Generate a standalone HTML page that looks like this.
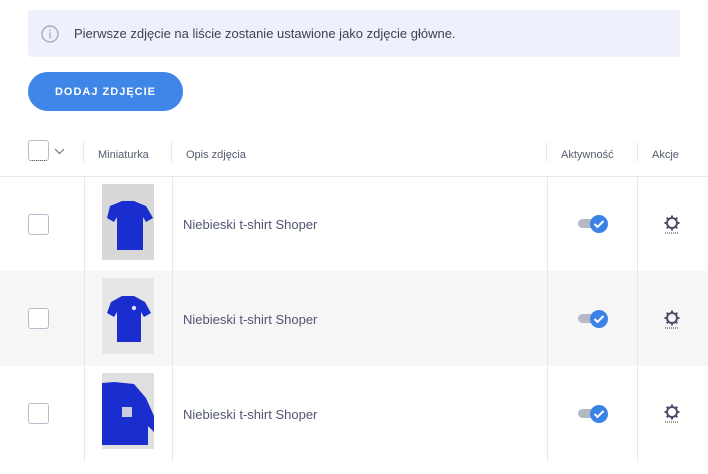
<!DOCTYPE html>
<html><head><meta charset="utf-8"><style>
body{margin:0;width:708px;height:474px;background:#fff;font-family:"Liberation Sans",sans-serif;position:relative;overflow:hidden;color:#4a5068}
.a{position:absolute}
.info{left:28px;top:10px;width:652px;height:47px;background:#eef1fb;border-radius:3px}
.btn{left:28px;top:72px;width:155px;height:39px;background:#3f86e8;border-radius:20px;color:#fff;font-weight:bold;font-size:11px;letter-spacing:1px;text-align:center;line-height:41px}
.hd{font-size:11px;color:#555b6e;top:149px}
.vl{width:1px;background:#e6e8ec}
.cb{width:19px;height:19px;border:1px solid #b9bccb;border-radius:3px;background:#fff}
.txt{font-size:13px;color:#505670}
.tog{width:22px;height:9px;background:#b4b9c6;border-radius:5px}
.knob{width:18px;height:18px;border-radius:50%;background:#3b82e6}
.img{width:52px;height:76px;background:#dcdcdc}
</style></head><body>
<div class="a info"></div>
<svg class="a" style="left:41px;top:25px" width="18" height="18" viewBox="0 0 18 18"><circle cx="9" cy="9" r="8" fill="none" stroke="#a7acbd" stroke-width="1.4"/><rect x="8.3" y="7.5" width="1.4" height="6" fill="#a7acbd"/><rect x="8.3" y="4.5" width="1.4" height="1.6" fill="#a7acbd"/></svg>
<div class="a txt" style="left:74px;top:26px;color:#3d4254">Pierwsze zdjęcie na liście zostanie ustawione jako zdjęcie główne.</div>
<div class="a btn">DODAJ ZDJĘCIE</div>
<div class="a cb" style="left:28px;top:140px;border-bottom:1px dotted #333"></div>
<svg class="a" style="left:54px;top:148px" width="11" height="7"><path d="M1 1l4.5 4.5L10 1" fill="none" stroke="#777" stroke-width="1.2"/></svg>
<div class="a vl" style="left:83px;top:142px;height:20px"></div>
<div class="a hd" style="left:98px">Miniaturka</div>
<div class="a vl" style="left:171px;top:142px;height:20px"></div>
<div class="a hd" style="left:186px">Opis zdjęcia</div>
<div class="a vl" style="left:546px;top:142px;height:20px"></div>
<div class="a hd" style="left:561px">Aktywność</div>
<div class="a vl" style="left:637px;top:142px;height:20px"></div>
<div class="a hd" style="left:652px">Akcje</div>
<div class="a" style="left:0;top:176px;width:708px;height:1px;background:#e8e9ec"></div>
<div class="a" style="left:0;top:271px;width:708px;height:95px;background:#f6f6f6"></div>
<div class="a vl" style="left:84px;top:177px;height:285px"></div>
<div class="a vl" style="left:172px;top:177px;height:285px"></div>
<div class="a vl" style="left:547px;top:177px;height:285px"></div>
<div class="a vl" style="left:637px;top:177px;height:285px"></div>

<div class="a cb" style="left:28px;top:214px"></div>
<div class="a img" style="left:102px;top:184px;background:#d8d8d8"><svg width="52" height="76"><path d="M8 22l12-5h12l12 5 7 12-7 4-3-5v33H15V33l-3 5-7-4z" fill="#1a2ed0"/></svg></div>
<div class="a txt" style="left:183px;top:217px">Niebieski t-shirt Shoper</div>
<div class="a tog" style="left:578px;top:219px"></div>
<div class="a knob" style="left:590px;top:215px"></div>
<svg class="a" style="left:593px;top:219px" width="12" height="10"><path d="M1.5 5l3 3 6-6" fill="none" stroke="#fff" stroke-width="2"/></svg>

<div class="a cb" style="left:28px;top:308px"></div>
<div class="a img" style="left:102px;top:278px;background:#e6e6e6"><svg width="52" height="76"><path d="M9 24l11-6h12l11 6 6 11-7 4-3-5v30H15V34l-3 5-7-4z" fill="#1a2ed0"/><circle cx="32" cy="30" r="2.2" fill="#dde"/></svg></div>
<div class="a txt" style="left:183px;top:312px">Niebieski t-shirt Shoper</div>
<div class="a tog" style="left:578px;top:314px"></div>
<div class="a knob" style="left:590px;top:310px"></div>
<svg class="a" style="left:593px;top:314px" width="12" height="10"><path d="M1.5 5l3 3 6-6" fill="none" stroke="#fff" stroke-width="2"/></svg>

<div class="a cb" style="left:28px;top:403px"></div>
<div class="a img" style="left:102px;top:373px;background:#e0e0e0"><svg width="52" height="76"><path d="M0 10l12-1 20 2 12 14 8 18v16l-6-6v19H0z" fill="#1a2ed0"/><rect x="20" y="34" width="10" height="10" fill="#ccd"/></svg></div>
<div class="a txt" style="left:183px;top:407px">Niebieski t-shirt Shoper</div>
<div class="a tog" style="left:578px;top:409px"></div>
<div class="a knob" style="left:590px;top:405px"></div>
<svg class="a" style="left:593px;top:409px" width="12" height="10"><path d="M1.5 5l3 3 6-6" fill="none" stroke="#fff" stroke-width="2"/></svg>

<svg class="a" style="left:662px;top:214px" width="20" height="20" viewBox="0 0 20 20"><g fill="none" stroke="#4a5068" stroke-width="2"><circle cx="10" cy="9" r="5"/><path d="M10 1.5v3M10 13.5v3M2.5 9h3M14.5 9h3M4.7 3.7l2 2M13.3 12.3l2 2M4.7 14.3l2-2M13.3 5.7l2-2"/></g><path d="M3 19h14" stroke="#333" stroke-dasharray="1 1"/></svg>
<svg class="a" style="left:662px;top:309px" width="20" height="20" viewBox="0 0 20 20"><g fill="none" stroke="#4a5068" stroke-width="2"><circle cx="10" cy="9" r="5"/><path d="M10 1.5v3M10 13.5v3M2.5 9h3M14.5 9h3M4.7 3.7l2 2M13.3 12.3l2 2M4.7 14.3l2-2M13.3 5.7l2-2"/></g><path d="M3 19h14" stroke="#333" stroke-dasharray="1 1"/></svg>
<svg class="a" style="left:662px;top:403px" width="20" height="20" viewBox="0 0 20 20"><g fill="none" stroke="#4a5068" stroke-width="2"><circle cx="10" cy="9" r="5"/><path d="M10 1.5v3M10 13.5v3M2.5 9h3M14.5 9h3M4.7 3.7l2 2M13.3 12.3l2 2M4.7 14.3l2-2M13.3 5.7l2-2"/></g><path d="M3 19h14" stroke="#333" stroke-dasharray="1 1"/></svg>
</body></html>
